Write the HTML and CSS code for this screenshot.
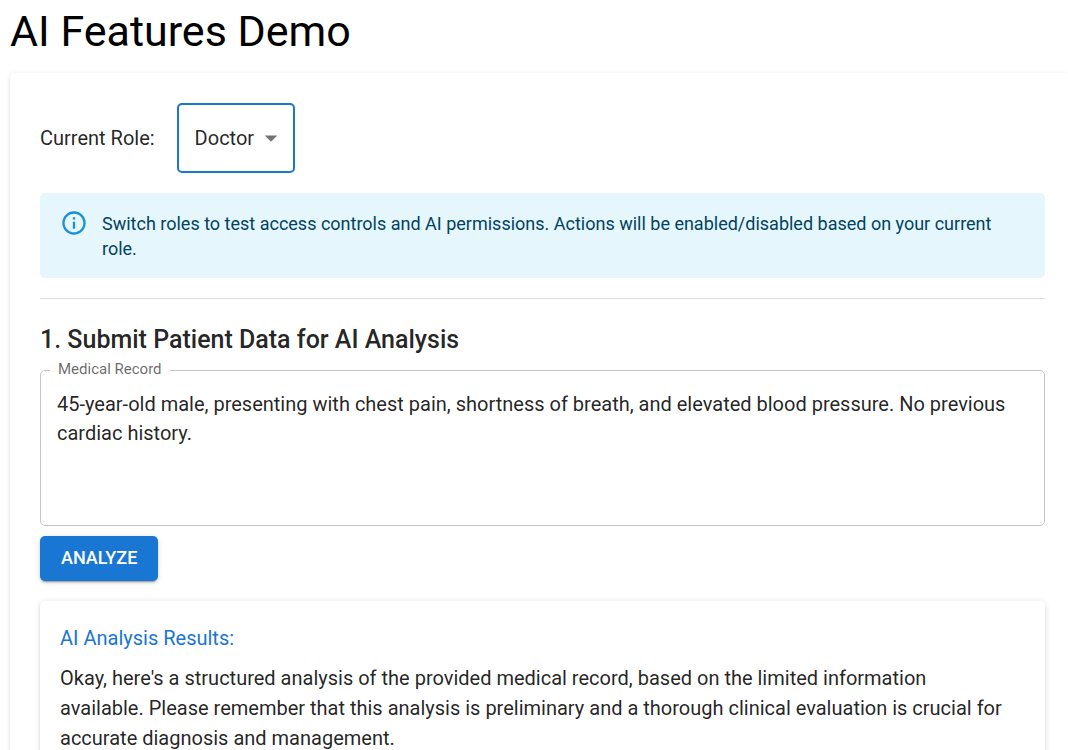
FILE: index.html
```html
<!DOCTYPE html>
<html lang="en">

<head>
    <meta charset="UTF-8">
    <meta name="viewport" content="width=device-width, initial-scale=1.0">
    <title>AI Features Demo</title>
    <link rel="stylesheet" href="styles.css">
</head>

<body>
    <h1 class="page-title">AI Features Demo</h1>

    <main class="paper">
        <div class="role-row">
            <label for="role-select">Current Role:</label>
            <div class="role-select-wrap">
                <select id="role-select" class="role-select">
                    <option>Doctor</option>
                </select>
                <svg class="role-arrow" viewBox="0 0 24 24" aria-hidden="true">
                    <path d="M7 10l5 5 5-5z" />
                </svg>
            </div>
        </div>

        <div class="alert" role="alert">
            <svg class="alert-icon" viewBox="0 0 24 24" aria-hidden="true">
                <path d="M11,9H13V7H11M12,20C7.59,20 4,16.41 4,12C4,7.59 7.59,4 12,4C16.41,4 20,7.59 20,12C20,16.41 16.41,20 12,20M12,2A10,10 0 0,0 2,12A10,10 0 0,0 12,22A10,10 0 0,0 22,12A10,10 0 0,0 12,2M11,17H13V11H11V17Z" />
            </svg>
            <p class="alert-message">Switch roles to test access controls and AI permissions. Actions will be enabled/disabled based on your current role.</p>
        </div>

        <hr class="divider">

        <h2 class="section-title">1. Submit Patient Data for AI Analysis</h2>

        <div class="field">
            <label class="field-label" for="medical-record">Medical Record</label>
            <textarea id="medical-record" class="field-input" spellcheck="false">45-year-old male, presenting with chest pain, shortness of breath, and elevated blood pressure. No previous cardiac history.</textarea>
        </div>

        <button type="button" class="analyze-button">Analyze</button>

        <section class="results">
            <h3 class="results-title">AI Analysis Results:</h3>
            <p class="results-text">Okay, here's a structured analysis of the provided medical record, based on the limited information available. Please remember that this analysis is preliminary and a thorough clinical evaluation is crucial for accurate diagnosis and management.</p>
        </section>
    </main>
</body>

</html>
```

FILE: styles.css
```css
* {
    box-sizing: border-box;
}

body {
    margin: 0;
    padding: 5px 0 0 10px;
    background-color: white;
    color: rgba(0, 0, 0, 0.87);
    font-family: Roboto, "Liberation Sans", sans-serif;
    font-size: 20px;
    line-height: 30px;
}

h1,
h2,
h3,
p {
    margin: 0;
}

.page-title {
    margin-bottom: 15px;
    color: black;
    font-size: 43px;
    font-weight: 400;
    line-height: 53px;
}

.paper {
    padding: 30px 23px 30px 30px;
    border-radius: 5px 0 0 5px;
    box-shadow: 0 2px 1px -1px rgba(0, 0, 0, 0.2), 0 1px 1px 0 rgba(0, 0, 0, 0.14), 0 1px 4px 0 rgba(0, 0, 0, 0.12);
}

.role-row {
    display: flex;
    align-items: center;
    gap: 22px;
    margin-bottom: 20px;
}

.role-select-wrap {
    position: relative;
}

.role-select {
    appearance: none;
    display: block;
    height: 70px;
    padding: 0 38px 0 16px;
    border: 2px solid #1976d2;
    border-radius: 5px;
    outline: none;
    background-color: white;
    color: inherit;
    font: inherit;
    cursor: pointer;
}

.role-arrow {
    position: absolute;
    top: 20px;
    right: 9px;
    width: 30px;
    height: 30px;
    fill: rgba(0, 0, 0, 0.54);
    pointer-events: none;
}

.alert {
    display: flex;
    gap: 14px;
    padding: 8px 20px 7px;
    border-radius: 5px;
    background-color: #e5f6fd;
    color: #014361;
    font-size: 18px;
    line-height: 25px;
}

.alert-icon {
    flex-shrink: 0;
    width: 28px;
    height: 28px;
    margin-top: 8px;
    fill: #0288d1;
    opacity: 0.9;
}

.alert-message {
    padding: 10px 0;
}

.divider {
    height: 1px;
    margin: 20px 0;
    border: none;
    background-color: rgba(0, 0, 0, 0.12);
}

.section-title {
    margin-bottom: 9px;
    font-size: 25px;
    font-weight: 500;
    line-height: 42px;
}

.field {
    position: relative;
    margin-bottom: 10px;
}

/* sits over the top border of the text box */
.field-label {
    position: absolute;
    top: -11px;
    left: 10px;
    padding: 0 8px;
    background-color: white;
    color: rgba(0, 0, 0, 0.6);
    font-size: 15px;
    line-height: 20px;
}

.field-input {
    display: block;
    width: 100%;
    height: 156px;
    padding: 19px 16px;
    border: 1px solid #c4c4c4;
    border-radius: 5px;
    outline: none;
    background-color: transparent;
    color: inherit;
    font: inherit;
    line-height: 29px;
    resize: none;
}

.analyze-button {
    display: block;
    margin-bottom: 20px;
    padding: 6px 21px 8px;
    border: none;
    border-radius: 5px;
    background-color: #1976d2;
    box-shadow: 0 3px 1px -2px rgba(0, 0, 0, 0.2), 0 2px 2px 0 rgba(0, 0, 0, 0.14), 0 1px 6px 0 rgba(0, 0, 0, 0.12);
    color: white;
    font-family: inherit;
    font-size: 18px;
    font-weight: 500;
    line-height: 31px;
    text-transform: uppercase;
    cursor: pointer;
}

.results {
    padding: 20px 36px 20px 20px;
    border-radius: 5px;
    box-shadow: 0 3px 1px -2px rgba(0, 0, 0, 0.2), 0 2px 2px 0 rgba(0, 0, 0, 0.14), 0 1px 6px 0 rgba(0, 0, 0, 0.12);
}

.results-title {
    margin-bottom: 7px;
    color: #1976d2;
    font-size: 20px;
    font-weight: 400;
    line-height: 35px;
}
```
